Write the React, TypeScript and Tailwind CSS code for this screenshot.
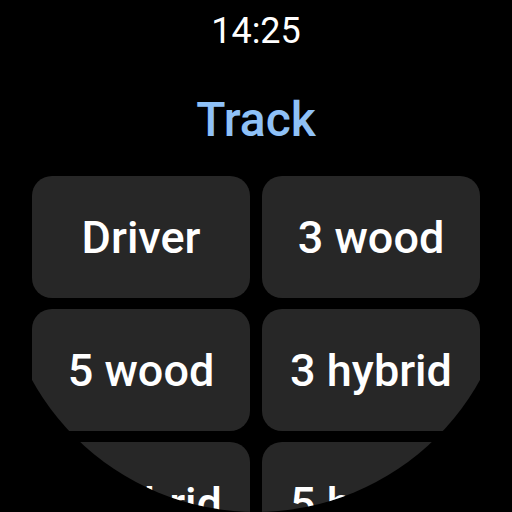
const clubs = ["Driver", "3 wood", "5 wood", "3 hybrid", "4 hybrid", "5 hybrid"];

export default function App() {
  return (
    <div className="w-[512px] h-[512px] bg-black overflow-hidden">
      <div
        className="w-[512px] h-[512px] rounded-full overflow-hidden bg-black flex flex-col items-center"
        style={{ fontFamily: "Roboto, 'Noto Sans', sans-serif" }}
      >
        <div className="mt-[13px] text-[36px] leading-none text-white font-normal">14:25</div>
        <div className="mt-[47px] text-[48px] leading-none font-medium text-[#8fc1f7]">Track</div>
        <div className="mt-[32px] w-full px-[32px] grid grid-cols-2 gap-x-[12px] gap-y-[11px] auto-rows-[122px]">
          {clubs.map((c) => (
            <button
              key={c}
              className="rounded-[20px] bg-[#272727] flex items-center justify-center text-white text-[45px] font-medium leading-none"
            >
              {c}
            </button>
          ))}
        </div>
      </div>
    </div>
  );
}
